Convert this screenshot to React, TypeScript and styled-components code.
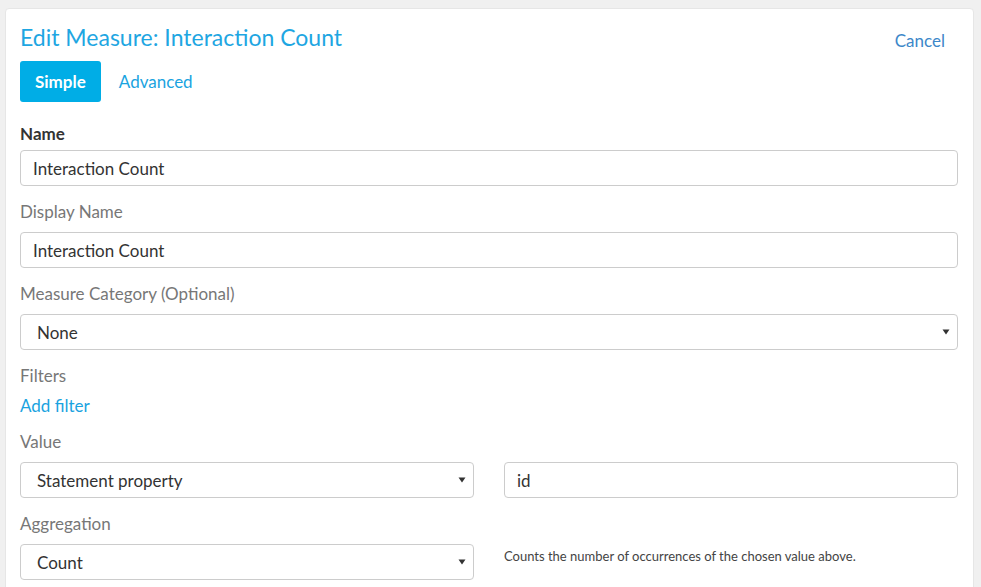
import React from "react";
import styled, { createGlobalStyle } from "styled-components";

const GlobalStyle = createGlobalStyle`
    html, body {
        margin: 0;
        padding: 0;
        background: #f0f0f0;
        font-family: Lato, "Open Sans", sans-serif;
    }
    * {
        box-sizing: border-box;
    }
`;

const Page = styled.div`
    padding: 8px 7px 0 5px;
    height: 587px;
    overflow: hidden;
`;

const Card = styled.div`
    background: #ffffff;
    border: 1px solid #e6e6e6;
    border-radius: 4px;
    padding: 13px 15px 20px 14px;
    min-height: 600px;
`;

const Header = styled.div`
    display: flex;
    justify-content: space-between;
    align-items: flex-start;
`;

const Title = styled.h1`
    margin: 0;
    font-size: 23px;
    font-weight: 400;
    line-height: 30px;
    color: #1ea6e2;
`;

const CancelLink = styled.a`
    font-size: 17px;
    color: #3d87c9;
    margin: 8px 13px 0 0;
    cursor: pointer;
`;

const Tabs = styled.div`
    display: flex;
    align-items: center;
    gap: 3px;
    margin-top: 9px;
    margin-bottom: 22px;
`;

const TabButton = styled.button<{ $active?: boolean }>`
    font-family: inherit;
    font-size: 17px;
    height: 41px;
    padding: 0 15px;
    border: none;
    border-radius: 3px;
    cursor: pointer;
    background: ${(p) => (p.$active ? "#00ade6" : "transparent")};
    color: ${(p) => (p.$active ? "#ffffff" : "#1aa3e0")};
    font-weight: ${(p) => (p.$active ? 700 : 400)};
`;

const Group = styled.div`
    margin-bottom: 16px;
`;

const Label = styled.div<{ $strong?: boolean }>`
    font-size: 17px;
    line-height: 20px;
    color: ${(p) => (p.$strong ? "#333333" : "#777777")};
    font-weight: ${(p) => (p.$strong ? 700 : 400)};
    margin-bottom: ${(p) => (p.$strong ? "6px" : "10px")};
`;

const TextInput = styled.div`
    height: 36px;
    border: 1px solid #cccccc;
    border-radius: 4px;
    padding: 0 12px;
    display: flex;
    align-items: center;
    font-size: 17px;
    color: #333333;
`;

const SelectBox = styled.div`
    height: 36px;
    border: 1px solid #cccccc;
    border-radius: 4px;
    padding: 0 7px 0 16px;
    display: flex;
    align-items: center;
    justify-content: space-between;
    font-size: 17px;
    color: #333333;
`;

const AddLink = styled.a`
    display: block;
    font-size: 17px;
    line-height: 20px;
    color: #1aa3e0;
    margin-top: 0;
    margin-bottom: 2px;
    cursor: pointer;
`;

const Row = styled.div`
    display: grid;
    grid-template-columns: 1fr 1fr;
    gap: 30px;
    align-items: start;
`;

const HelpText = styled.div`
    font-size: 13px;
    color: #444444;
    padding-top: 4px;
`;

const Caret = () => (
    <svg width="8" height="6" viewBox="0 0 8 6">
        <path d="M0.5 0.5 L7.5 0.5 L4 5.5 Z" fill="#333" />
    </svg>
);

const Select = ({ value }: { value: string }) => (
    <SelectBox>
        <span>{value}</span>
        <Caret />
    </SelectBox>
);

export default function App() {
    return (
        <Page>
            <GlobalStyle />
            <Card>
                <Header>
                    <Title>Edit Measure: Interaction Count</Title>
                    <CancelLink>Cancel</CancelLink>
                </Header>
                <Tabs>
                    <TabButton $active>Simple</TabButton>
                    <TabButton>Advanced</TabButton>
                </Tabs>

                <Group>
                    <Label $strong>Name</Label>
                    <TextInput>Interaction Count</TextInput>
                </Group>
                <Group>
                    <Label>Display Name</Label>
                    <TextInput>Interaction Count</TextInput>
                </Group>
                <Group>
                    <Label>Measure Category (Optional)</Label>
                    <Select value="None" />
                </Group>
                <Group>
                    <Label>Filters</Label>
                    <AddLink>Add filter</AddLink>
                </Group>
                <Group>
                    <Label>Value</Label>
                    <Row>
                        <Select value="Statement property" />
                        <TextInput>id</TextInput>
                    </Row>
                </Group>
                <Group>
                    <Label>Aggregation</Label>
                    <Row>
                        <Select value="Count" />
                        <HelpText>Counts the number of occurrences of the chosen value above.</HelpText>
                    </Row>
                </Group>
            </Card>
        </Page>
    );
}
